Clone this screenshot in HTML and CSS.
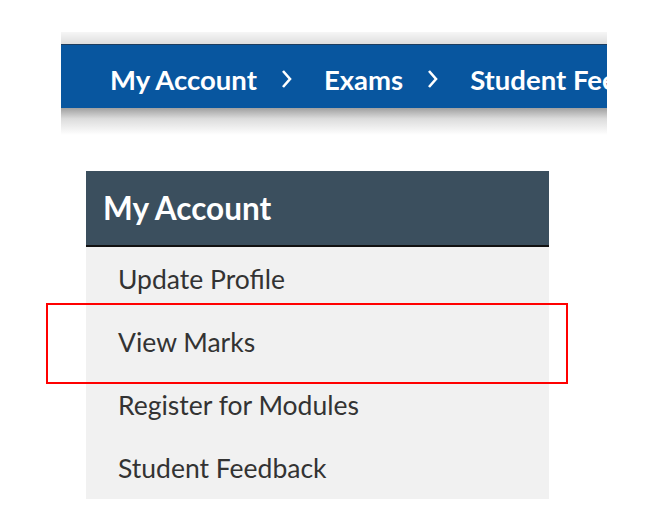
FILE: index.html
```html
<!DOCTYPE html>
<html>
<head>
<meta charset="utf-8">
<link rel="stylesheet" href="styles.css">
</head>
<body>
<div class="crumbs-wrap">
  <div class="shade-top"></div>
  <nav class="crumbs">
    <span class="crumb">My Account</span>
    <span class="sep"><svg width="12" height="20" viewBox="0 0 12 20"><path d="M2 2 L9 10 L2 18" fill="none" stroke="#fff" stroke-width="2.6"/></svg></span>
    <span class="crumb">Exams</span>
    <span class="sep"><svg width="12" height="20" viewBox="0 0 12 20"><path d="M2 2 L9 10 L2 18" fill="none" stroke="#fff" stroke-width="2.6"/></svg></span>
    <span class="crumb">Student Feedback</span>
  </nav>
  <div class="shade-bottom"></div>
</div>

<aside class="side">
  <h2 class="side-title">My Account</h2>
  <ul class="side-list">
    <li class="side-item">Update Profile</li>
    <li class="side-item">View Marks</li>
    <li class="side-item">Register for Modules</li>
    <li class="side-item">Student Feedback</li>
  </ul>
</aside>

<div class="highlight"></div>
</body>
</html>
```

FILE: styles.css
```css
html, body {
  margin: 0;
  padding: 0;
  background: #fff;
}
body {
  font-family: Lato, "Open Sans", sans-serif;
  position: relative;
  min-height: 532px;
}
.crumbs-wrap {
  margin: 32px 0 0 61px;
  width: 546px;
  overflow: hidden;
}
.shade-top {
  height: 12px;
  background: linear-gradient(#f6f6f6, #dedede);
}
.crumbs {
  box-sizing: border-box;
  height: 64px;
  padding-top: 5px;
  border-top: 1px solid #1e3d5e;
  background: #08569f;
  display: flex;
  align-items: center;
  white-space: nowrap;
  padding-left: 49px;
  color: #fff;
  font-weight: 700;
  font-size: 27.5px;
}
.crumb {
  flex: none;
}
.sep {
  flex: none;
  display: flex;
  align-items: center;
  margin: 0 31px 0 24px;
}
.shade-bottom {
  height: 27px;
  background: linear-gradient(#a0a0a0, #dcdcdc 40%, #fff);
}
.side {
  margin: 36px 0 0 86px;
  width: 463px;
}
.side-title {
  margin: 0;
  height: 74px;
  display: flex;
  align-items: center;
  padding-left: 17px;
  background: #3b4f5e;
  border-bottom: 2px solid #111;
  color: #fff;
  font-size: 31.5px;
  font-weight: 700;
}
.side-list {
  list-style: none;
  margin: 0;
  padding: 0;
  background: #f1f1f1;
}
.side-item {
  height: 63px;
  display: flex;
  align-items: center;
  padding-left: 32px;
  font-size: 26.5px;
  color: #333;
}
.highlight {
  position: absolute;
  left: 46px;
  top: 303px;
  width: 518px;
  height: 77px;
  border: 2px solid #f00;
}
```
